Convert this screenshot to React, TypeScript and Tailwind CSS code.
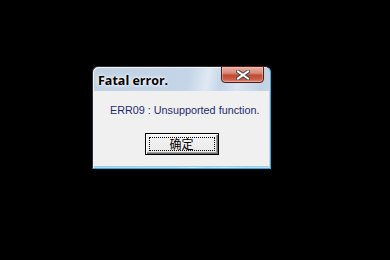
import React from "react";

export default function App() {
  return (
    <div className="w-[390px] h-[260px] bg-black pt-[66px] pl-[92px]">
      <div className="w-[179px] h-[103px] flex flex-col rounded-t-[6px] border border-[#2e2e2e] border-r-[#35a9d8] border-b-[#35a9d8] bg-[linear-gradient(100deg,#bfd1e3_0%,#c4d5e7_50%,#dfe9f3_60%,#c3d5e7_67%,#d9e5f0_76%,#c0d3e5_88%,#c9d9e9_100%)] shadow-[inset_1px_1px_0_rgba(255,255,255,0.75)]">
        <div className="h-[24px] flex items-start justify-between">
          <div
            className="pl-[5px] pt-[6px] text-[12.5px] leading-[16px] font-bold text-black [text-shadow:0_0_5px_#ffffff,0_0_3px_#ffffff]"
            style={{ fontFamily: '"Open Sans", "Noto Sans", sans-serif' }}
          >
            Fatal error.
          </div>
          <div className="-mt-px mr-[6px] w-[43px] h-[17px] rounded-b-[4px] border border-[#4a1f18] bg-[linear-gradient(180deg,#eab0a4_0%,#d88a7a_40%,#c24a33_55%,#c85a45_80%,#dc8c78_100%)] shadow-[inset_0_0_0_1px_rgba(255,200,190,0.45)] flex items-center justify-center">
            <svg width="14" height="10" viewBox="0 0 14 10">
              <path d="M2 1.5 L12 8.5 M12 1.5 L2 8.5" stroke="#4a4a4a" strokeWidth="4" strokeLinecap="square" />
              <path d="M2 1.5 L12 8.5 M12 1.5 L2 8.5" stroke="#ffffff" strokeWidth="2" strokeLinecap="square" />
            </svg>
          </div>
        </div>
        <div className="flex-1 mx-px mb-px bg-[#f0f0f0] border-b border-[#8fd3ef] flex flex-col">
          <div
            className="pl-[16px] pt-[13px] text-[10.8px] leading-[13px] text-[#1e2b72] whitespace-nowrap"
            style={{ fontFamily: '"Liberation Sans", Arial, sans-serif' }}
          >
            ERR09 : Unsupported function.
          </div>
          <div className="flex justify-center pt-[16px]">
            <button className="w-[74px] h-[22px] border border-black bg-[linear-gradient(180deg,#f4f4f4_0%,#e9e9e9_100%)] p-[3px] shadow-[inset_1px_1px_0_#ffffff,inset_-1px_-1px_0_#6a6a6a,inset_-2px_-2px_0_#a0a0a0]">
              <div
                className="w-full h-full border border-dotted border-black flex items-center justify-center text-[12px] leading-none text-black"
                style={{ fontFamily: '"Noto Sans CJK SC", "Noto Sans", sans-serif' }}
              >
                确定
              </div>
            </button>
          </div>
        </div>
      </div>
    </div>
  );
}
